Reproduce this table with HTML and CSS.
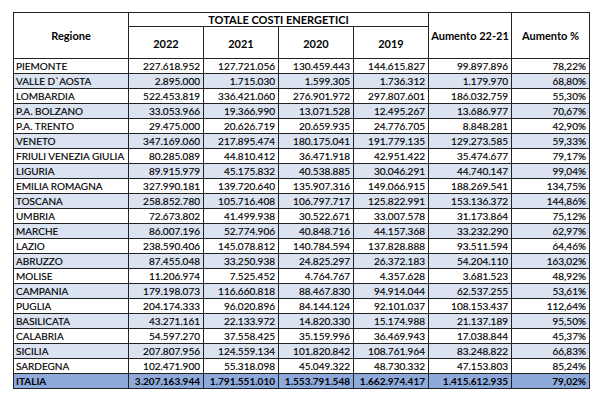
FILE: index.html
```html
<!DOCTYPE html>
<html lang="it">
<head>
<meta charset="utf-8">
<link rel="stylesheet" href="styles.css">
</head>
<body>
<table class="tbl">
  <colgroup>
    <col class="c-reg"><col class="c-y"><col class="c-y"><col class="c-y"><col class="c-y"><col class="c-a"><col class="c-p">
  </colgroup>
  <thead>
    <tr class="h1">
      <th rowspan="2">Regione</th>
      <th colspan="4">TOTALE COSTI ENERGETICI</th>
      <th rowspan="2">Aumento 22-21</th>
      <th rowspan="2">Aumento %</th>
    </tr>
    <tr class="h2">
      <th>2022</th><th>2021</th><th>2020</th><th>2019</th>
    </tr>
  </thead>
  <tbody>
    <tr><td>PIEMONTE</td><td>227.618.952</td><td>127.721.056</td><td>130.459.443</td><td>144.615.827</td><td>99.897.896</td><td>78,22%</td></tr>
    <tr class="alt"><td>VALLE D`AOSTA</td><td>2.895.000</td><td>1.715.030</td><td>1.599.305</td><td>1.736.312</td><td>1.179.970</td><td>68,80%</td></tr>
    <tr><td>LOMBARDIA</td><td>522.453.819</td><td>336.421.060</td><td>276.901.972</td><td>297.807.601</td><td>186.032.759</td><td>55,30%</td></tr>
    <tr class="alt"><td>P.A. BOLZANO</td><td>33.053.966</td><td>19.366.990</td><td>13.071.528</td><td>12.495.267</td><td>13.686.977</td><td>70,67%</td></tr>
    <tr><td>P.A. TRENTO</td><td>29.475.000</td><td>20.626.719</td><td>20.659.935</td><td>24.776.705</td><td>8.848.281</td><td>42,90%</td></tr>
    <tr class="alt"><td>VENETO</td><td>347.169.060</td><td>217.895.474</td><td>180.175.041</td><td>191.779.135</td><td>129.273.585</td><td>59,33%</td></tr>
    <tr><td>FRIULI VENEZIA GIULIA</td><td>80.285.089</td><td>44.810.412</td><td>36.471.918</td><td>42.951.422</td><td>35.474.677</td><td>79,17%</td></tr>
    <tr class="alt"><td>LIGURIA</td><td>89.915.979</td><td>45.175.832</td><td>40.538.885</td><td>30.046.291</td><td>44.740.147</td><td>99,04%</td></tr>
    <tr><td>EMILIA ROMAGNA</td><td>327.990.181</td><td>139.720.640</td><td>135.907.316</td><td>149.066.915</td><td>188.269.541</td><td>134,75%</td></tr>
    <tr class="alt"><td>TOSCANA</td><td>258.852.780</td><td>105.716.408</td><td>106.797.717</td><td>125.822.991</td><td>153.136.372</td><td>144,86%</td></tr>
    <tr><td>UMBRIA</td><td>72.673.802</td><td>41.499.938</td><td>30.522.671</td><td>33.007.578</td><td>31.173.864</td><td>75,12%</td></tr>
    <tr class="alt"><td>MARCHE</td><td>86.007.196</td><td>52.774.906</td><td>40.848.716</td><td>44.157.368</td><td>33.232.290</td><td>62,97%</td></tr>
    <tr><td>LAZIO</td><td>238.590.406</td><td>145.078.812</td><td>140.784.594</td><td>137.828.888</td><td>93.511.594</td><td>64,46%</td></tr>
    <tr class="alt"><td>ABRUZZO</td><td>87.455.048</td><td>33.250.938</td><td>24.825.297</td><td>26.372.183</td><td>54.204.110</td><td>163,02%</td></tr>
    <tr><td>MOLISE</td><td>11.206.974</td><td>7.525.452</td><td>4.764.767</td><td>4.357.628</td><td>3.681.523</td><td>48,92%</td></tr>
    <tr class="alt"><td>CAMPANIA</td><td>179.198.073</td><td>116.660.818</td><td>88.467.830</td><td>94.914.044</td><td>62.537.255</td><td>53,61%</td></tr>
    <tr><td>PUGLIA</td><td>204.174.333</td><td>96.020.896</td><td>84.144.124</td><td>92.101.037</td><td>108.153.437</td><td>112,64%</td></tr>
    <tr class="alt"><td>BASILICATA</td><td>43.271.161</td><td>22.133.972</td><td>14.820.330</td><td>15.174.988</td><td>21.137.189</td><td>95,50%</td></tr>
    <tr><td>CALABRIA</td><td>54.597.270</td><td>37.558.425</td><td>35.159.996</td><td>36.469.943</td><td>17.038.844</td><td>45,37%</td></tr>
    <tr class="alt"><td>SICILIA</td><td>207.807.956</td><td>124.559.134</td><td>101.820.842</td><td>108.761.964</td><td>83.248.822</td><td>66,83%</td></tr>
    <tr><td>SARDEGNA</td><td>102.471.900</td><td>55.318.098</td><td>45.049.322</td><td>48.730.332</td><td>47.153.803</td><td>85,24%</td></tr>
    <tr class="total"><td>ITALIA</td><td>3.207.163.944</td><td>1.791.551.010</td><td>1.553.791.548</td><td>1.662.974.417</td><td>1.415.612.935</td><td>79,02%</td></tr>
  </tbody>
</table>
</body>
</html>
```

FILE: styles.css
```css
html, body {
  margin: 0;
  padding: 0;
  background: #ffffff;
}
body {
  padding: 12px 0 0 13px;
  font-family: Lato, "Liberation Sans", sans-serif;
  color: #000;
}
.tbl {
  border-collapse: collapse;
  table-layout: fixed;
  width: 577px;
  border: 1.5px solid #222;
}
.c-reg { width: 115px; }
.c-y { width: 75px; }
.c-a { width: 83px; }
.c-p { width: 78px; }
.tbl th {
  font-size: 11px;
  font-weight: 700;
  text-align: center;
  vertical-align: middle;
  border: 1px solid #222;
  padding: 0;
  line-height: 12px;
}
.h1 th { height: 13px; }
.h2 th { height: 29px; padding-top: 2px; }
.tbl td {
  font-size: 10px;
  height: 14px;
  line-height: 12px;
  padding: 0 3px 0 2px;
  border: 1px solid #222;
  text-align: right;
  white-space: nowrap;
  overflow: hidden;
  -webkit-text-stroke: 0.15px #000;
}
.tbl td:first-child {
  text-align: left;
}
.alt td {
  background: #dbe3f1;
}
.total td {
  background: #8eaadb;
  font-weight: 700;
  border-top: 1.5px solid #222;
  -webkit-text-stroke: 0;
}
```
